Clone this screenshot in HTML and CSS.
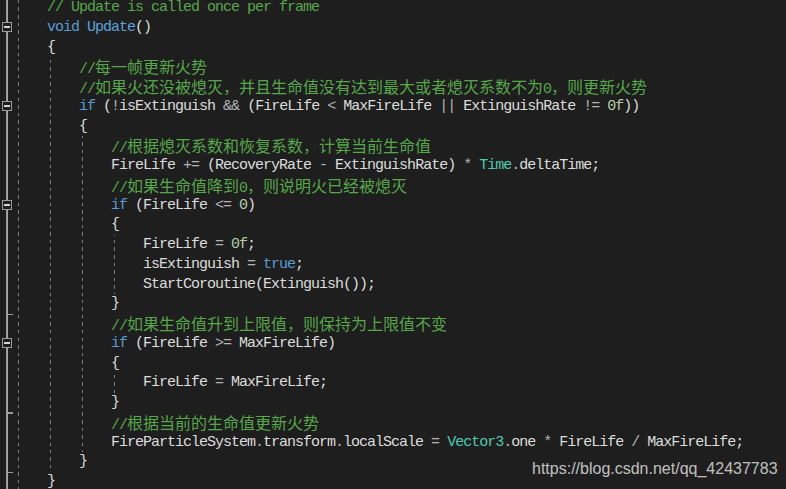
FILE: index.html
```html
<!DOCTYPE html>
<html>
<head>
<meta charset="utf-8">
<link rel="stylesheet" href="styles.css">
</head>
<body>
<div class="editor">
  <div class="row"><span class="gut"></span><span class="code"><span class="ind"></span><span class="cm">// Update is called once per frame</span></span></div>
  <div class="row"><span class="gut fold"></span><span class="code"><span class="ind"></span><span class="kw">void</span> <span class="fn">Update</span><span class="pn">()</span></span></div>
  <div class="row"><span class="gut"></span><span class="code"><span class="ind"></span><span class="pn">{</span></span></div>
  <div class="row"><span class="gut"></span><span class="code"><span class="ind"></span><span class="ind"></span><span class="cm">//<span class="zh">每一帧更新火势</span></span></span></div>
  <div class="row"><span class="gut"></span><span class="code"><span class="ind"></span><span class="ind"></span><span class="cm">//<span class="zh">如果火还没被熄灭，并且生命值没有达到最大或者熄灭系数不为</span>0<span class="zh">，则更新火势</span></span></span></div>
  <div class="row"><span class="gut fold"></span><span class="code"><span class="ind"></span><span class="ind"></span><span class="kw">if</span> <span class="pn">(</span><span class="op">!</span>isExtinguish <span class="op">&amp;&amp;</span> <span class="pn">(</span>FireLife <span class="op">&lt;</span> MaxFireLife <span class="op">||</span> ExtinguishRate <span class="op">!=</span> <span class="num">0f</span><span class="pn">))</span></span></div>
  <div class="row"><span class="gut"></span><span class="code"><span class="ind"></span><span class="ind"></span><span class="pn">{</span></span></div>
  <div class="row"><span class="gut"></span><span class="code"><span class="ind"></span><span class="ind"></span><span class="ind"></span><span class="cm">//<span class="zh">根据熄灭系数和恢复系数，计算当前生命值</span></span></span></div>
  <div class="row"><span class="gut"></span><span class="code"><span class="ind"></span><span class="ind"></span><span class="ind"></span>FireLife <span class="op">+=</span> <span class="pn">(</span>RecoveryRate <span class="op">-</span> ExtinguishRate<span class="pn">)</span> <span class="op">*</span> <span class="ty">Time</span><span class="op">.</span>deltaTime<span class="pn">;</span></span></div>
  <div class="row"><span class="gut"></span><span class="code"><span class="ind"></span><span class="ind"></span><span class="ind"></span><span class="cm">//<span class="zh">如果生命值降到</span>0<span class="zh">，则说明火已经被熄灭</span></span></span></div>
  <div class="row"><span class="gut fold"></span><span class="code"><span class="ind"></span><span class="ind"></span><span class="ind"></span><span class="kw">if</span> <span class="pn">(</span>FireLife <span class="op">&lt;=</span> <span class="num">0</span><span class="pn">)</span></span></div>
  <div class="row"><span class="gut"></span><span class="code"><span class="ind"></span><span class="ind"></span><span class="ind"></span><span class="pn">{</span></span></div>
  <div class="row"><span class="gut"></span><span class="code"><span class="ind"></span><span class="ind"></span><span class="ind"></span><span class="ind"></span>FireLife <span class="op">=</span> <span class="num">0f</span><span class="pn">;</span></span></div>
  <div class="row"><span class="gut"></span><span class="code"><span class="ind"></span><span class="ind"></span><span class="ind"></span><span class="ind"></span>isExtinguish <span class="op">=</span> <span class="kw">true</span><span class="pn">;</span></span></div>
  <div class="row"><span class="gut"></span><span class="code"><span class="ind"></span><span class="ind"></span><span class="ind"></span><span class="ind"></span>StartCoroutine<span class="pn">(</span>Extinguish<span class="pn">());</span></span></div>
  <div class="row"><span class="gut end"></span><span class="code"><span class="ind"></span><span class="ind"></span><span class="ind"></span><span class="pn">}</span></span></div>
  <div class="row"><span class="gut"></span><span class="code"><span class="ind"></span><span class="ind"></span><span class="ind"></span><span class="cm">//<span class="zh">如果生命值升到上限值，则保持为上限值不变</span></span></span></div>
  <div class="row"><span class="gut fold"></span><span class="code"><span class="ind"></span><span class="ind"></span><span class="ind"></span><span class="kw">if</span> <span class="pn">(</span>FireLife <span class="op">&gt;=</span> MaxFireLife<span class="pn">)</span></span></div>
  <div class="row"><span class="gut"></span><span class="code"><span class="ind"></span><span class="ind"></span><span class="ind"></span><span class="pn">{</span></span></div>
  <div class="row"><span class="gut"></span><span class="code"><span class="ind"></span><span class="ind"></span><span class="ind"></span><span class="ind"></span>FireLife <span class="op">=</span> MaxFireLife<span class="pn">;</span></span></div>
  <div class="row"><span class="gut end"></span><span class="code"><span class="ind"></span><span class="ind"></span><span class="ind"></span><span class="pn">}</span></span></div>
  <div class="row"><span class="gut"></span><span class="code"><span class="ind"></span><span class="ind"></span><span class="ind"></span><span class="cm">//<span class="zh">根据当前的生命值更新火势</span></span></span></div>
  <div class="row"><span class="gut"></span><span class="code"><span class="ind"></span><span class="ind"></span><span class="ind"></span>FireParticleSystem<span class="op">.</span>transform<span class="op">.</span>localScale <span class="op">=</span> <span class="ty">Vector3</span><span class="op">.</span>one <span class="op">*</span> FireLife <span class="op">/</span> MaxFireLife<span class="pn">;</span></span></div>
  <div class="row"><span class="gut end"></span><span class="code"><span class="ind"></span><span class="ind"></span><span class="pn">}</span></span></div>
  <div class="row"><span class="gut end"></span><span class="code"><span class="ind"></span><span class="pn">}</span></span></div>
</div>
<div class="watermark">https://blog.csdn.net/qq_42437783</div>
</body>
</html>
```
FILE: styles.css
```css
html, body {
  margin: 0;
  padding: 0;
  background: #1e1e1e;
  overflow: hidden;
}
body {
  width: 786px;
  height: 489px;
  position: relative;
}
.editor {
  margin-top: -2px;
  display: flex;
  flex-direction: column;
}
.row {
  display: flex;
  height: 19.75px;
}
.gut {
  flex: 0 0 15px;
  height: 19.75px;
  position: relative;
  background: linear-gradient(to right, transparent 6px, #8f8f8f 6px, #a8a8a8 7.5px, transparent 8px);
}
.fold::after {
  content: "";
  position: absolute;
  left: 2px;
  top: 4px;
  width: 8px;
  height: 8px;
  border: 1px solid #9a9a9a;
  background-image: linear-gradient(to bottom, transparent 3.5px, #d4d4d4 3.5px, #d4d4d4 5px, transparent 5px);
  background-size: 6px 8px;
  background-position: 1px 0;
  background-repeat: no-repeat;
  background-color: #1e1e1e;
}
.end::after {
  content: "";
  position: absolute;
  left: 7px;
  bottom: -1px;
  width: 6px;
  height: 1.5px;
  background: #9a9a9a;
}
.code {
  white-space: pre;
  font-family: "Liberation Mono", monospace;
  font-size: 15px;
  letter-spacing: -1px;
  line-height: 19.75px;
  height: 19.75px;
  color: #dcdcdc;
}
.ind {
  display: inline-block;
  width: 32px;
  height: 19.75px;
  vertical-align: top;
  position: relative;
}
.ind::before {
  content: "";
  position: absolute;
  left: 3px;
  top: 0;
  width: 1px;
  height: 100%;
  background-image: repeating-linear-gradient(to bottom, #7a7a7a 0, #7a7a7a 3.5px, transparent 3.5px, transparent 7.5px);
  background-attachment: fixed;
}
.kw { color: #569cd6; }
.fn { color: #5aa2dc; }
.pn { color: #dcdcdc; }
.op { color: #b4b4b4; }
.num { color: #b5cea8; }
.ty { color: #4ec9b0; }
.cm { color: #57a64a; }
.zh {
  font-family: "Noto Sans CJK SC", sans-serif;
  font-size: 16px;
  letter-spacing: 0;
}
.watermark {
  position: absolute;
  left: 532px;
  top: 459px;
  font-family: "Liberation Sans", Arial, sans-serif;
  font-size: 16px;
  line-height: 20px;
  color: rgba(235, 235, 235, 0.8);
  white-space: nowrap;
}
```
